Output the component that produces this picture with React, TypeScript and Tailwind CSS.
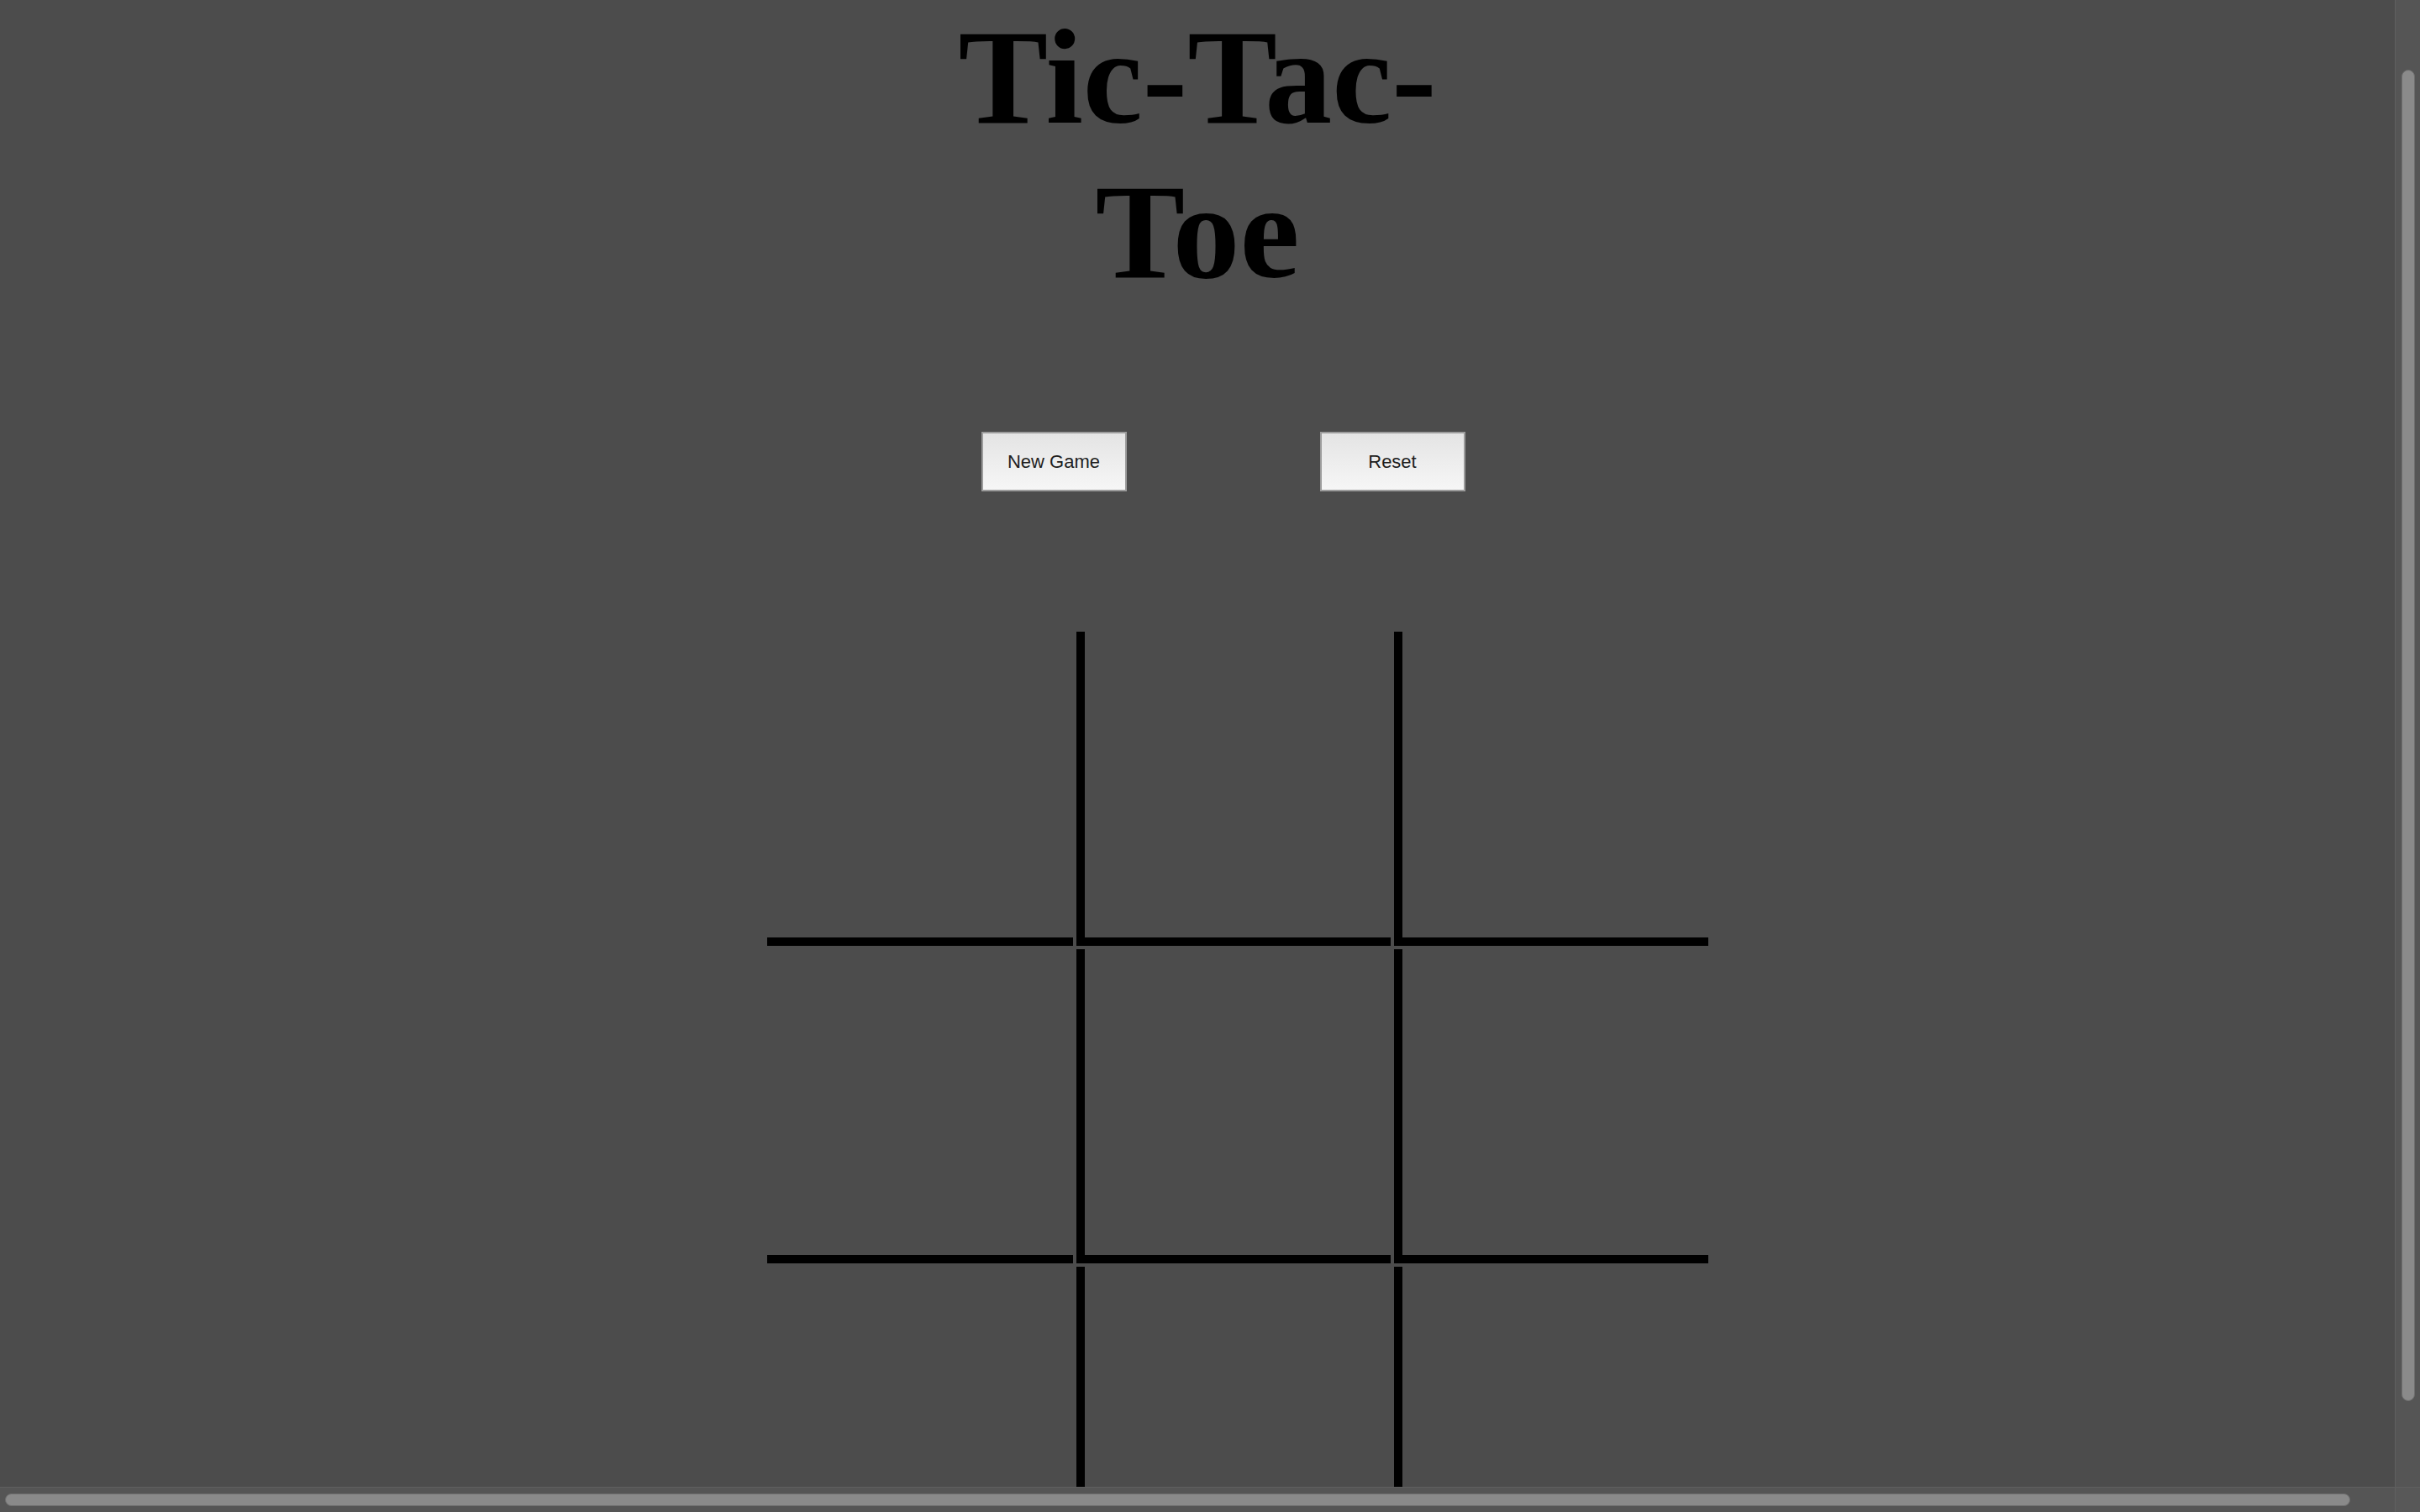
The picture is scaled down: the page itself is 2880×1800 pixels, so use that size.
import React from 'react';

// board cells: col 0 has no left rule, last row has no bottom rule
const cells = Array.from({ length: 9 }, (_, i) => ({ row: Math.floor(i / 3), col: i % 3 }));

function Cell({ row, col }: { row: number; col: number }) {
  const left = col > 0;
  const bottom = row < 2;
  return (
    <div
      className={[
        'box-border border-black',
        left ? 'w-[374px] border-l-[10px]' : 'w-[364px]',
        bottom ? 'h-[374px] border-b-[10px]' : 'h-[364px]',
      ].join(' ')}
    />
  );
}

function GameButton({ label }: { label: string }) {
  return (
    <button
      className="h-[71px] w-[173px] border-2 border-[#9c9c9c] bg-gradient-to-b from-[#e4e4e4] to-[#f6f6f6] text-[22px] text-[#1e1e1e]"
      style={{ fontFamily: '"Liberation Sans", Arial, sans-serif' }}
    >
      {label}
    </button>
  );
}

export default function App() {
  return (
    <div className="flex h-[1800px] w-[2880px] flex-col overflow-hidden bg-[#4c4c4c]">
      <div className="flex min-h-0 flex-1">
        {/* page content */}
        <div className="flex min-w-0 flex-1 flex-col overflow-hidden">
          <h1
            className="mx-auto w-[640px] text-center text-[160px] font-bold leading-[184px] text-black"
            style={{ fontFamily: '"Liberation Serif", "Times New Roman", serif' }}
          >
            Tic-Tac-Toe
          </h1>

          <div className="mt-[146px] flex justify-center gap-[230px] pl-[61px]">
            <GameButton label="New Game" />
            <GameButton label="Reset" />
          </div>

          <div className="mt-[167px] flex justify-center pl-[96px]">
            <div className="grid grid-cols-[364px_374px_374px] gap-[4px]">
              {cells.map((c) => (
                <Cell key={`${c.row}-${c.col}`} row={c.row} col={c.col} />
              ))}
            </div>
          </div>
        </div>

        {/* vertical scrollbar */}
        <div className="flex w-[30px] flex-col border-l border-[#5f5f5f] bg-[#555555] pl-[7px] pr-[6px] pt-[83px] pb-[102px]">
          <div className="flex-1 rounded-full border border-[#6e6e6e] bg-[#8a8a8a]" />
        </div>
      </div>

      {/* horizontal scrollbar */}
      <div className="flex h-[30px]">
        <div className="flex flex-1 border-t border-[#5f5f5f] bg-[#555555] py-[7px] pl-[6px] pr-[53px]">
          <div className="flex-1 rounded-full border border-[#6e6e6e] bg-[#8a8a8a]" />
        </div>
        <div className="w-[30px] border-l border-t border-[#5f5f5f] bg-[#585858]" />
      </div>
    </div>
  );
}
